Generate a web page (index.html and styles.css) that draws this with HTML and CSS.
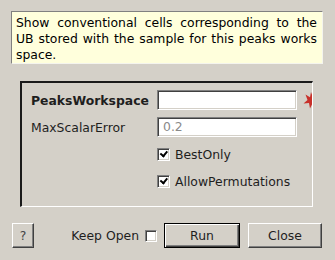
FILE: index.html
```html
<!DOCTYPE html>
<html lang="en">
<head>
    <meta charset="UTF-8">
    <title>FindPossibleCells</title>
    <link rel="stylesheet" href="styles.css">
</head>
<body>
    <div class="dialog">
        <div class="tip">
            <span class="tip-line full">Show conventional cells corresponding to the</span>
            <span class="tip-line full">UB stored with the sample for this peaks works</span>
            <span class="tip-line">space.</span>
        </div>

        <div class="group">
            <div class="form">
                <label class="field-label bold">PeaksWorkspace</label>
                <div class="input"></div>
                <span class="required">
                    <svg width="18" height="18" viewBox="0 0 18 18">
                        <path d="M9 1 L11 6.5 L17 5.5 L13 9.5 L16 15 L10.5 12.5 L8 17.5 L7 12 L1.5 12.5 L5.5 9 L3.5 3.5 L8 6.2 Z" fill="#c8302a"/>
                    </svg>
                </span>

                <label class="field-label">MaxScalarError</label>
                <div class="input placeholder">0.2</div>
                <span></span>

                <span></span>
                <label class="check"><span class="box checked"></span>BestOnly</label>
                <span></span>

                <span></span>
                <label class="check"><span class="box checked"></span>AllowPermutations</label>
                <span></span>
            </div>
        </div>

        <div class="actions">
            <button class="btn btn-help">?</button>
            <label class="keep-open">Keep Open <span class="box small"></span></label>
            <button class="btn btn-default">Run</button>
            <button class="btn btn-close">Close</button>
        </div>
    </div>
</body>
</html>
```

FILE: styles.css
```css
:root {
    --color-bg: #d4d0c8;
    --color-text: #000000;
    --color-dark: #404040;
    --color-mid: #808080;
    --color-light: #ffffff;
}

* {
    margin: 0;
    padding: 0;
    box-sizing: border-box;
}

body {
    font-family: 'DejaVu Sans', 'Liberation Sans', sans-serif;
    font-size: 12.4px;
    background: var(--color-bg);
    color: var(--color-text);
    width: 335px;
    height: 260px;
    overflow: hidden;
}

.dialog {
    display: flex;
    flex-direction: column;
    padding-top: 11px;
}

/* help text on top */
.tip {
    margin: 0 12px 0 11px;
    height: 53px;
    padding: 3px 5px 0 4px;
    background: #ffffdc;
    border-top: 1px solid var(--color-mid);
    border-left: 1px solid var(--color-mid);
    border-right: 1px solid #f4f4ee;
    border-bottom: 1px solid #f4f4ee;
    line-height: 16px;
}

.tip-line {
    display: block;
    text-align: left;
}

.tip-line.full {
    text-align: justify;
    text-align-last: justify;
}

/* property box */
.group {
    margin: 17px 22px 0 20px;
    height: 126px;
    border-top: 2px solid #1a1a1a;
    border-left: 2px solid #1a1a1a;
    border-right: 1px solid var(--color-light);
    border-bottom: 1px solid var(--color-light);
    overflow: hidden;
}

.form {
    display: grid;
    grid-template-columns: 126px 140px 24px;
    grid-auto-rows: 20px;
    row-gap: 7px;
    align-items: center;
    padding: 7px 0 0 9px;
}

.field-label {
    color: #1e1e1e;
}

.bold {
    font-weight: bold;
}

.input {
    height: 20px;
    background: var(--color-light);
    border-top: 1px solid var(--color-mid);
    border-left: 1px solid var(--color-mid);
    border-right: 1px solid var(--color-light);
    border-bottom: 1px solid var(--color-light);
    box-shadow: inset 1px 1px 0 var(--color-dark), inset -1px -1px 0 var(--color-bg);
    padding: 1px 5px;
    line-height: 16px;
}

.placeholder {
    color: #8a8a8a;
}

.required {
    display: flex;
    align-items: center;
    padding-left: 5px;
}

.check {
    display: flex;
    align-items: center;
    gap: 5px;
    color: #1e1e1e;
}

.box {
    display: inline-block;
    width: 13px;
    height: 13px;
    background: var(--color-light);
    border-top: 1px solid var(--color-mid);
    border-left: 1px solid var(--color-mid);
    border-right: 1px solid var(--color-light);
    border-bottom: 1px solid var(--color-light);
    box-shadow: inset 1px 1px 0 var(--color-dark), inset -1px -1px 0 var(--color-bg);
    position: relative;
}

.box.checked::after {
    content: "";
    position: absolute;
    left: 3px;
    top: 2px;
    width: 5px;
    height: 3px;
    border-left: 2px solid #000;
    border-bottom: 2px solid #000;
    transform: rotate(-50deg);
    transform-origin: 40% 60%;
}

.box.small {
    width: 12px;
    height: 12px;
}

/* buttons row */
.actions {
    display: flex;
    align-items: center;
    margin: 16px 13px 0 12px;
    height: 25px;
}

.btn {
    font-family: inherit;
    font-size: 12.4px;
    color: #1e1e1e;
    height: 25px;
    background: var(--color-bg);
    border-top: 1px solid var(--color-light);
    border-left: 1px solid var(--color-light);
    border-right: 1px solid var(--color-dark);
    border-bottom: 1px solid var(--color-dark);
    box-shadow: inset -1px -1px 0 var(--color-mid);
    cursor: pointer;
}

.btn-help {
    width: 22px;
    color: #444;
}

.keep-open {
    display: flex;
    align-items: center;
    gap: 6px;
    margin-left: auto;
    margin-right: 7px;
    color: #1e1e1e;
}

.btn-default {
    width: 76px;
    margin-right: 8px;
    border: 1px solid #000;
    box-shadow: inset 1px 1px 0 var(--color-light), inset -1px -1px 0 var(--color-dark), inset -2px -2px 0 var(--color-mid);
}

.btn-close {
    width: 74px;
}
```
